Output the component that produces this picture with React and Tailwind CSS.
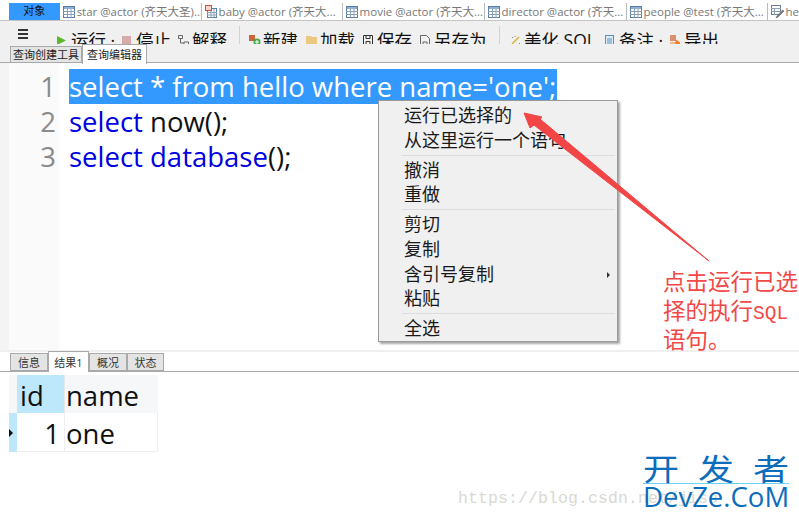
import React from 'react';

const CJK = '"Noto Sans CJK SC"';
const UI_FONT = { fontFamily: `"Open Sans", ${CJK}, sans-serif` };

const TableIcon = () => (
  <svg width="12" height="12" viewBox="0 0 12 12" className="shrink-0">
    <rect x="0.5" y="0.5" width="11" height="11" fill="#fff" stroke="#5a7ea8" />
    <rect x="1" y="1" width="10" height="2" fill="#8fb0d4" />
    <path d="M0 5.5h12M0 8.5h12M4.5 3v9M8 3v9" stroke="#8aa0b8" strokeWidth="1" />
  </svg>
);

// baby 标签的图标：左上角带红色小表
const RedTableIcon = () => (
  <svg width="12" height="13" viewBox="0 0 12 13" className="shrink-0">
    <rect x="2.500" y="3.500" width="9" height="9" fill="#fff" stroke="#5a7ea8" />
    <path d="M2 7.500h10M2 10h10M6 4v9M9 4v9" stroke="#8aa0b8" />
    <rect x="0.500" y="0.500" width="6" height="5" fill="#f6d5d0" stroke="#d0503c" />
  </svg>
);

const PencilTableIcon = () => (
  <svg width="13" height="13" viewBox="0 0 13 13" className="shrink-0">
    <rect x="0.500" y="0.500" width="9" height="9" fill="#fff" stroke="#6a7f96" />
    <path d="M0 3.500h10M0 6.500h10M3.500 3v7" stroke="#8aa0b8" />
    <path d="M11.500 5L6 11l-1 2 2-1 6-6z" fill="#8a8a8a" stroke="#555" strokeWidth=".6" />
  </svg>
);

const DOC_TABS = [
  { label: 'star @actor (齐天大圣)...', w: 'w-[143px]', Icon: TableIcon },
  { label: 'baby @actor (齐天大...', w: 'w-[142px]', Icon: RedTableIcon },
  { label: 'movie @actor (齐天大...', w: 'w-[143px]', Icon: TableIcon },
  { label: 'director @actor (齐天...', w: 'w-[143px]', Icon: TableIcon },
  { label: 'people @test (齐天大...', w: 'w-[142px]', Icon: TableIcon },
];

const TabBar = () => (
  <div className="flex h-[21px] shrink-0 items-start border-b border-[#c4c4c4] bg-white pt-[3px] pl-[9px]">
    <div className="flex h-[17px] w-[51px] items-center justify-center bg-[#3399ff] text-[11px] text-[#111]">对象</div>
    {DOC_TABS.map(({ label, w, Icon }) => (
      <div key={label} className={`flex h-[17px] ${w} items-center gap-[2px] border-r border-[#bbb] pl-[3px] text-[11.5px] text-[#777] whitespace-nowrap overflow-hidden`}>
        <Icon />
        <span>{label}</span>
      </div>
    ))}
    <div className="flex h-[17px] items-center gap-[2px] pl-[3px] text-[11.5px] text-[#777]">
      <PencilTableIcon />
      <span>he</span>
    </div>
  </div>
);

const ToolItem = ({ icon, label, className = '' }) => (
  <div className={`flex items-start whitespace-nowrap ${className}`}>
    <span className="flex h-[22px] w-[14px] shrink-0 items-center">{icon}</span>
    <span>{label}</span>
  </div>
);

const Toolbar = () => (
  <div className="relative flex h-[42px] shrink-0 flex-col border-b border-[#a9a9a9] bg-[#f0f0f0] pl-[9px]">
    <div className="h-[23px] shrink-0 overflow-hidden">
      <div className="flex h-[30px] items-start pt-[8px] text-[17.5px] leading-[22px] text-[#111]">
        <div className="flex w-[48px] flex-col gap-[2px] pl-[9px]">
          <span className="h-[2px] w-[10px] bg-[#333]" />
          <span className="h-[2px] w-[10px] bg-[#333]" />
          <span className="h-[2px] w-[10px] bg-[#333]" />
        </div>
        <ToolItem
          className="w-[65px]"
          label="运行 ·"
          icon={<svg width="9" height="9" viewBox="0 0 9 9"><path d="M0 0l9 4.5L0 9z" fill="#5cb82e" /></svg>}
        />
        <ToolItem
          className="w-[56px]"
          label="停止"
          icon={<span className="h-[9px] w-[9px] bg-[#d9aaaa]" />}
        />
        <ToolItem
          className="w-[71px]"
          label="解释"
          icon={<svg width="11" height="10" viewBox="0 0 11 10"><path d="M.5.5h4v3h-4zM6 7h4.5v2.5H6zM2.5 3.5V8H6" fill="none" stroke="#666" /></svg>}
        />
        <ToolItem
          className="w-[57px]"
          label="新建"
          icon={<svg width="12" height="11" viewBox="0 0 12 11"><rect x="0" y="0" width="6" height="6" fill="#d0653a" /><circle cx="8" cy="7" r="3.5" fill="#49a84a" /><path d="M6 7h4M8 5v4" stroke="#fff" /></svg>}
        />
        <ToolItem
          className="w-[57px]"
          label="加载"
          icon={<svg width="12" height="10" viewBox="0 0 12 10"><path d="M0 1h5l1 1h5v8H0z" fill="#ecc87e" /></svg>}
        />
        <ToolItem
          className="w-[57px]"
          label="保存"
          icon={<svg width="10" height="10" viewBox="0 0 10 10"><path d="M.5.5h9v9h-9zM3 .5v3h4v-3M3 9.5v-3h4v3" fill="none" stroke="#333" /></svg>}
        />
        <ToolItem
          className="w-[90px]"
          label="另存为"
          icon={<svg width="10" height="11" viewBox="0 0 10 11"><path d="M.5.5h6l3 3v7h-9zM3 7h4v3.500H3z" fill="none" stroke="#666" /></svg>}
        />
        <ToolItem
          className="w-[95px]"
          label="美化 SQL"
          icon={<svg width="11" height="11" viewBox="0 0 11 11"><path d="M2 9l7-7" stroke="#d9b53a" strokeWidth="1.500" /><path d="M2 2l1 1M9 8l1 1M5 1v1" stroke="#888" /></svg>}
        />
        <ToolItem
          className="w-[65px]"
          label="备注 ·"
          icon={<svg width="9" height="11" viewBox="0 0 9 11"><rect x=".5" y=".5" width="8" height="10" fill="#dcebf5" stroke="#5a94bd" /><path d="M2 4h5M2 6h5M2 8h5" stroke="#5a94bd" /></svg>}
        />
        <ToolItem
          label="导出"
          icon={<svg width="12" height="11" viewBox="0 0 12 11"><rect width="6" height="6" fill="#d0653a" opacity=".7" /><path d="M0 8h8M6 5l4 3-4 3z" stroke="#f07d20" fill="#f07d20" /></svg>}
        />
      </div>
      <span className="absolute top-[5px] left-[239px] h-[18px] w-px bg-[#d2d2d2]" />
      <span className="absolute top-[5px] left-[499px] h-[18px] w-px bg-[#d2d2d2]" />
    </div>
    <div className="flex h-[19px] items-end pl-[1px] text-[11px] leading-none text-[#222]">
      <div className="flex h-[17px] w-[72px] items-center justify-center border border-[#a9a9a9] bg-[#e4e4e4]">查询创建工具</div>
      <div className="relative top-px flex h-[20px] w-[65px] items-center justify-center border border-b-0 border-[#a9a9a9] bg-white">查询编辑器</div>
    </div>
  </div>
);

const Editor = () => (
  <div className="flex h-[287px] shrink-0 bg-white">
    <div className="w-[9px] shrink-0 bg-[#f4f4f4]" />
    <div className="w-[50px] shrink-0 bg-[#fafafa] pt-[6px] pr-[3px] text-right text-[27.5px] leading-[35px] text-[#8a8a8a]">
      <div>1</div>
      <div>2</div>
      <div>3</div>
    </div>
    <div className="pt-[6px] pl-[10px] text-[27.5px] leading-[35px] whitespace-pre">
      <div className="h-[35px] w-[488px] bg-[#3399ff] text-white">select * from hello where name='one';</div>
      <div className="text-[#111]"><span className="text-[#0000e0]">select</span> now();</div>
      <div className="text-[#111]"><span className="text-[#0000e0]">select database</span>();</div>
    </div>
  </div>
);

const MenuItem = ({ children, arrow }) => (
  <div className="relative h-[24.750px] pl-[25px] text-[18px] leading-[24.750px] text-[#1a1a1a]">
    {children}
    {arrow && (
      <span className="absolute top-[10px] right-[7px] h-0 w-0 border-y-[3px] border-l-[3px] border-y-transparent border-l-[#333]" />
    )}
  </div>
);

const Sep = () => <div className="my-[2px] ml-[23px] mr-[2px] h-px bg-[#dddddd]" />;

const ContextMenu = () => (
  <div className="absolute top-[100px] left-[378px] w-[240px] border border-[#9a9a9a] bg-[#f0f0f0] pt-[2px] pb-[0.500px] shadow-[2px_2px_2px_rgba(0,0,0,0.35)]">
    <MenuItem>运行已选择的</MenuItem>
    <MenuItem>从这里运行一个语句</MenuItem>
    <Sep />
    <MenuItem>撤消</MenuItem>
    <MenuItem>重做</MenuItem>
    <Sep />
    <MenuItem>剪切</MenuItem>
    <MenuItem>复制</MenuItem>
    <MenuItem arrow>含引号复制</MenuItem>
    <MenuItem>粘贴</MenuItem>
    <Sep />
    <MenuItem>全选</MenuItem>
  </div>
);

const ResultTabs = () => (
  <div className="flex h-[20px] shrink-0 items-end border-b border-[#a9a9a9] bg-white pl-[10px] text-[11px] leading-none text-[#333]">
    <div className="flex h-[18px] w-[38px] items-center justify-center border border-[#a9a9a9] bg-[#e4e4e4]">信息</div>
    <div className="relative top-px flex h-[21px] w-[41px] items-center justify-center border border-b-0 border-[#a9a9a9] bg-white">结果1</div>
    <div className="flex h-[18px] w-[38px] items-center justify-center border border-[#a9a9a9] bg-[#e4e4e4]">概况</div>
    <div className="flex h-[18px] w-[37px] items-center justify-center border border-[#a9a9a9] bg-[#e4e4e4]">状态</div>
  </div>
);

const ResultGrid = () => (
  <div className="grid w-[158px] grid-cols-[8px_47px_94px] grid-rows-[38px_39px] pl-[9px] text-[27.5px] leading-none text-[#111]">
    <div className="bg-[#f6f7f9]" />
    <div className="flex items-center bg-[#bde8fb] pt-[3px] pl-[3px]">id</div>
    <div className="flex items-center border-l border-[#e8e8e8] bg-[#f6f7f9] pt-[3px] pl-[1px]">name</div>
    <div className="flex items-center bg-[#bde8fb]">
      <span className="h-0 w-0 border-y-[4px] border-l-[4px] border-y-transparent border-l-[#111]" />
    </div>
    <div className="flex items-center justify-end border-b border-[#eeeeee] pt-[3px] pr-[4px]">1</div>
    <div className="flex items-center border-x border-b border-[#eeeeee] pt-[3px] pl-[1px]">one</div>
  </div>
);

const Arrow = () => (
  <svg className="absolute top-[108px] left-[520px]" width="195" height="160" viewBox="0 0 195 160">
    <path d="M4 5L22 9L20 11L189 153L14 17L10 20Z" fill="#f24545" stroke="#f24545" strokeWidth="1" strokeLinejoin="round" />
  </svg>
);

const Watermark = () => (
  <>
    <div
      className="absolute top-[489px] left-[458px] text-[16.500px] leading-[20px] tracking-[0.100px] whitespace-nowrap text-[#d9d9d2]"
      style={{ fontFamily: '"Liberation Mono", monospace' }}
    >
      https://blog.csdn.net/jiso
    </div>
    <div className="absolute top-[453px] left-[643px] flex w-[146px] flex-col items-stretch text-[#0b6dbb]">
      <div className="flex h-[31px] justify-between border-b border-[#6fd0f5] px-[3px] text-[30px] leading-[31px]">
        <span className="scale-x-[1.2]">开</span>
        <span className="scale-x-[1.2]">发</span>
        <span className="scale-x-[1.2]">者</span>
      </div>
      <div className="text-[27.500px] leading-[25px] whitespace-nowrap" style={{ fontFamily: '"Open Sans", sans-serif' }}>DevZe.CoM</div>
    </div>
  </>
);

export default function App() {
  return (
    <div className="relative flex h-[519px] w-[799px] flex-col overflow-hidden bg-white" style={UI_FONT}>
      <TabBar />
      <Toolbar />
      <Editor />
      <div className="h-[2px] shrink-0 bg-[#f0f0f0]" />
      <ResultTabs />
      <div className="pt-[3px]">
        <ResultGrid />
      </div>

      <ContextMenu />
      <Arrow />
      <div
        className="absolute top-[266px] left-[663px] text-[22.500px] leading-[29px] whitespace-nowrap text-[#f24848]"
        style={{ fontFamily: `${CJK}, serif` }}
      >
        <div className="h-[29px]">点击运行已选</div>
        <div className="h-[29px]">择的执行<span className="text-[19.500px] leading-none" style={{ fontFamily: '"Liberation Mono", monospace' }}>SQL</span></div>
        <div className="h-[29px]">语句。</div>
      </div>
      <Watermark />
    </div>
  );
}
